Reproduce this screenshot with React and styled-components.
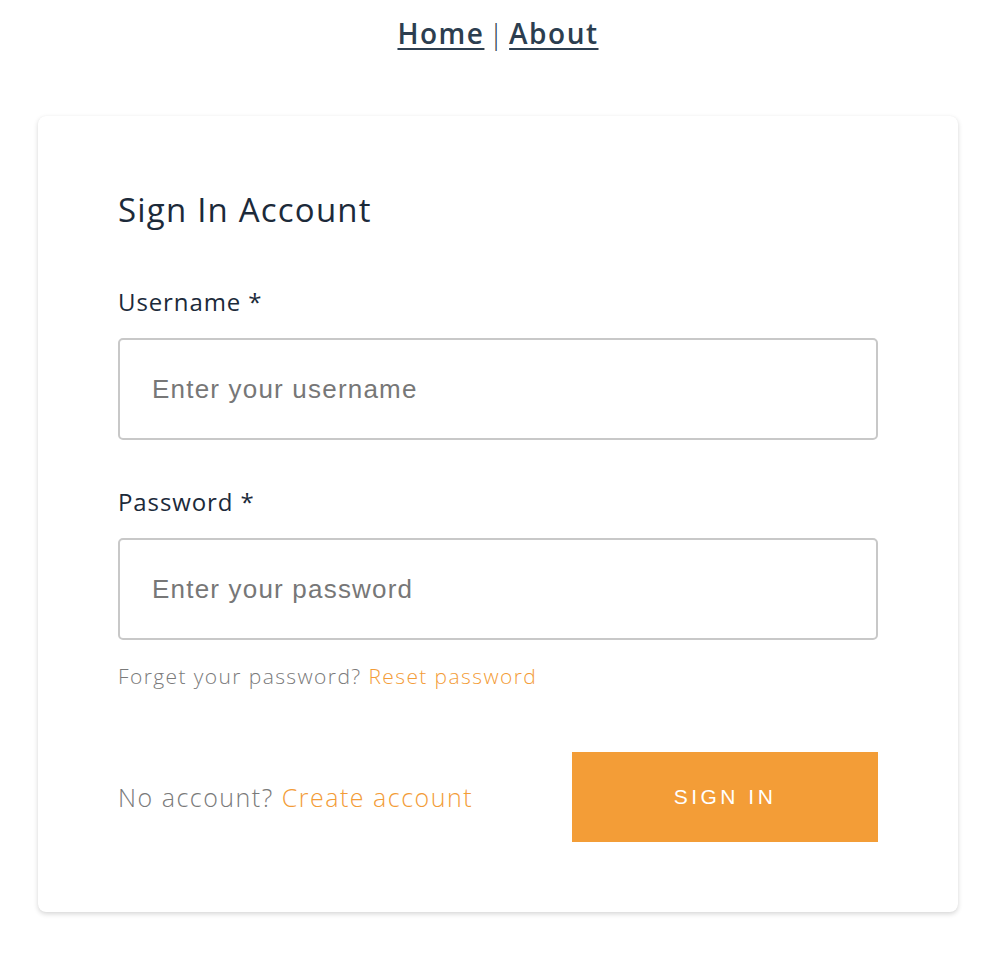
import React from "react";
import styled, { createGlobalStyle } from "styled-components";

const GlobalStyle = createGlobalStyle`
  body {
    margin: 0;
    background: #fff;
    font-family: "Open Sans", Lato, sans-serif;
    color: #2c3e50;
  }
`;

const Page = styled.div`
  width: 996px;
  padding-top: 16px;
  padding-bottom: 50px;
`;

const Nav = styled.nav`
  text-align: center;
  font-size: 28px;
  line-height: 34px;
  font-weight: 600;
  letter-spacing: 1.5px;
  color: #2c3e50;

  a {
    color: #2c3e50;
    text-decoration: underline;
    text-decoration-thickness: 2px;
    text-underline-offset: 4px;
  }
`;

const Divider = styled.span`
  font-weight: 300;
  margin: 0 4px;
`;

const Card = styled.div`
  width: 920px;
  box-sizing: border-box;
  margin: 66px auto 0;
  padding: 74px 80px 70px;
  background: #fff;
  border-radius: 8px;
  box-shadow: 0 2px 5px rgba(0, 0, 0, 0.16), 0 0 1px rgba(0, 0, 0, 0.06);
`;

const Title = styled.h1`
  margin: 0;
  font-size: 33px;
  line-height: 40px;
  font-weight: 400;
  letter-spacing: 1.2px;
  color: #1c2a3a;
`;

const Label = styled.label`
  display: block;
  margin-top: ${p => p.$top}px;
  font-size: 24px;
  line-height: 30px;
  letter-spacing: 0.9px;
  color: #1c2a3a;
`;

const Input = styled.input`
  display: block;
  width: 100%;
  height: 102px;
  box-sizing: border-box;
  margin-top: 21px;
  padding: 0 32px;
  border: 2px solid #c8c8c8;
  border-radius: 5px;
  font-family: "Liberation Sans", Arial, sans-serif;
  font-size: 26px;
  letter-spacing: 1.2px;
  color: #333;
  outline: none;

  &::placeholder {
    color: #777;
  }
`;

const Hint = styled.p`
  margin: 24px 0 0;
  font-size: 21px;
  line-height: 24px;
  font-weight: 300;
  letter-spacing: 1.4px;
  color: #7a7a7a;
`;

const Accent = styled.a`
  color: #f39c37;
  text-decoration: none;
`;

const Footer = styled.div`
  display: flex;
  align-items: center;
  justify-content: space-between;
  margin-top: 64px;
`;

const Prompt = styled.span`
  font-size: 25px;
  font-weight: 300;
  letter-spacing: 1.5px;
  color: #7a7a7a;
`;

const SignInButton = styled.button`
  width: 306px;
  height: 90px;
  border: none;
  border-radius: 0;
  background: #f39d37;
  color: #fff;
  font-family: "Liberation Sans", Arial, sans-serif;
  font-size: 21px;
  letter-spacing: 3.5px;
  cursor: pointer;
`;

export default function App() {
  return (
    <Page>
      <GlobalStyle />
      <Nav>
        <a href="#">Home</a>
        <Divider>|</Divider>
        <a href="#">About</a>
      </Nav>
      <Card>
        <Title>Sign In Account</Title>
        <Label $top={57}>Username *</Label>
        <Input placeholder="Enter your username" />
        <Label $top={47}>Password *</Label>
        <Input type="password" placeholder="Enter your password" />
        <Hint>
          Forget your password? <Accent href="#">Reset password</Accent>
        </Hint>
        <Footer>
          <Prompt>
            No account? <Accent href="#">Create account</Accent>
          </Prompt>
          <SignInButton>SIGN IN</SignInButton>
        </Footer>
      </Card>
    </Page>
  );
}
